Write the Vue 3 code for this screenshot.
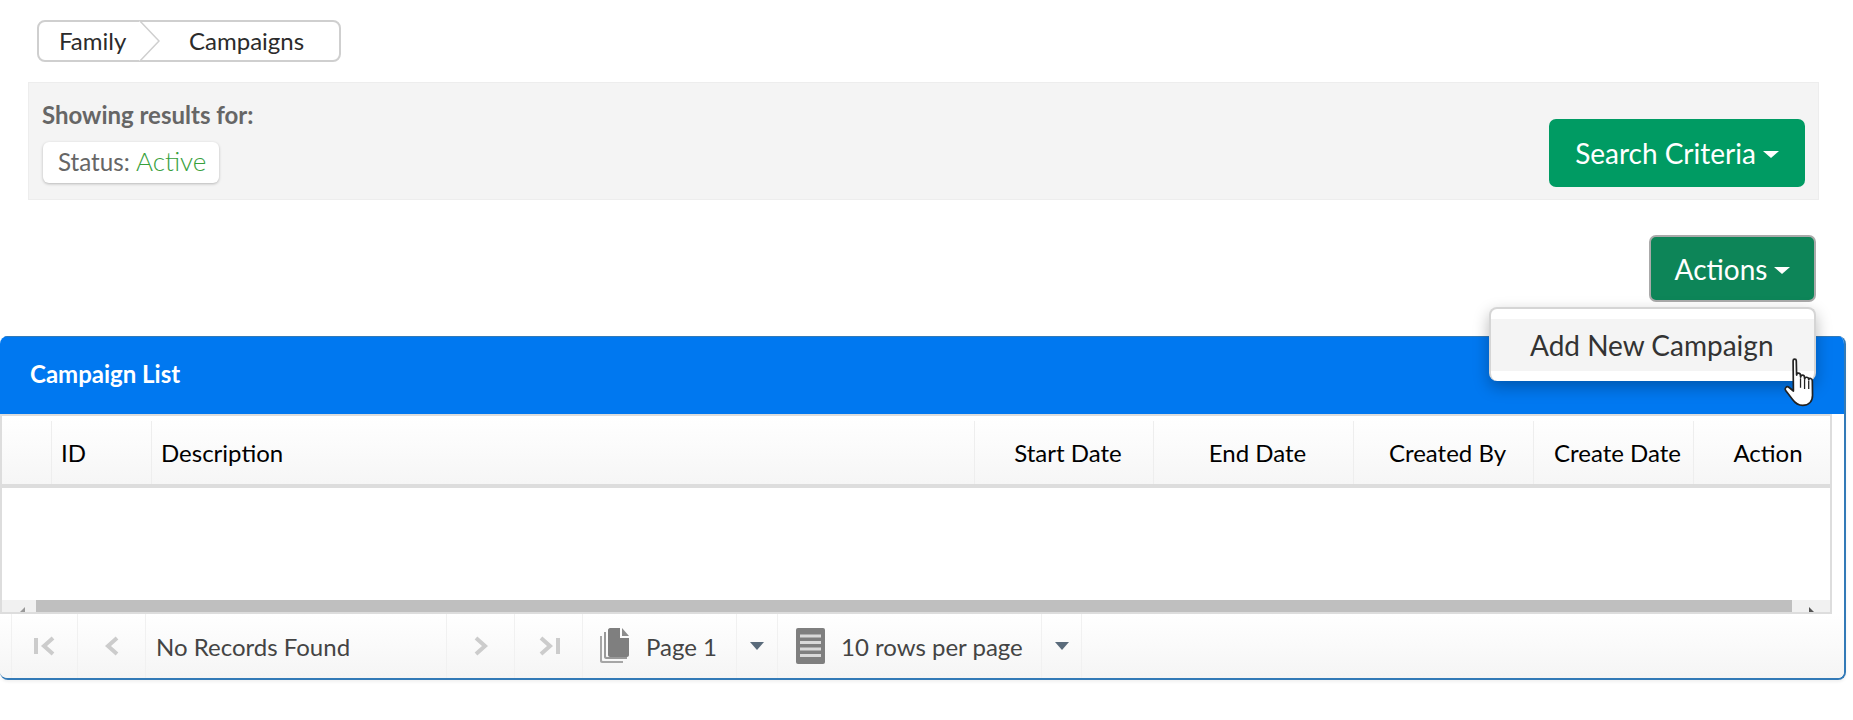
<template>
  <div class="page">
    <nav class="crumbs">
      <a class="crumb first">Family</a>
      <svg class="chev" width="22" height="42" viewBox="0 0 22 42"><path d="M1 0 L21 21 L1 42" fill="#fff" stroke="#cfcfcf" stroke-width="1.5"/></svg>
      <a class="crumb">Campaigns</a>
    </nav>

    <section class="filter">
      <div>
        <div class="filter-title">Showing results for:</div>
        <div class="chip">Status: <span class="active">Active</span></div>
      </div>
      <button class="btn search">Search Criteria<i class="caret"></i></button>
    </section>

    <div class="actions-row">
      <div class="actions-wrap">
        <button class="btn actions">Actions<i class="caret"></i></button>
        <div class="menu"><div class="menu-item">Add New Campaign</div></div>
        <svg class="hand" width="34" height="51" viewBox="0 0 32 48">
          <path d="M9.5 3.5 C9.5 1.5 12.5 1.5 12.5 3.5 L12.8 17 C13 14.5 16.2 14.5 16.4 17 L16.6 19 C16.8 16.5 20 16.5 20.2 19 L20.4 20.5 C20.8 18.5 24 18.5 24.2 21 C24.8 19.5 27.6 20 27.6 22.5 L27.8 36 C27.8 42 24 45.5 18.5 45.5 C14 45.5 11.5 43.5 9 40 L2.5 31.5 C1 29.5 3.5 27 5.5 28.5 L9.8 32 Z" fill="#fff" stroke="#222" stroke-width="1.6" stroke-linejoin="round"/>
          <path d="M16.5 20v9M20.3 21v9M24.2 22v8" stroke="#222" stroke-width="1.2" fill="none"/>
        </svg>
      </div>
    </div>

    <section class="card">
      <header class="card-head">Campaign List</header>
      <div class="grid-area">
        <div class="columns">
          <div v-for="col in columns" :key="col.label" class="col" :class="col.align" :style="{ width: col.width + 'px' }">{{ col.label }}</div>
        </div>
        <div class="rows"></div>
        <div class="scrollbar">
          <div class="track left"><i class="arrow arrow-l"></i></div>
          <div class="thumb"></div>
          <div class="track right"><i class="arrow arrow-r"></i></div>
        </div>
      </div>
      <footer class="pager">
        <div class="cell" style="width:12px"></div>
        <div class="cell icon-cell" style="width:66px">
          <svg width="24" height="22" viewBox="0 0 24 22"><path d="M3 3v16" stroke="#ccc" stroke-width="4"/><path d="M20 3 L11 11 L20 19" stroke="#ccc" stroke-width="4" fill="none"/></svg>
        </div>
        <div class="cell icon-cell" style="width:68px">
          <svg width="14" height="22" viewBox="0 0 14 22"><path d="M12 3 L3 11 L12 19" stroke="#ccc" stroke-width="4" fill="none"/></svg>
        </div>
        <div class="cell pager-text" style="width:301px">No Records Found</div>
        <div class="cell icon-cell" style="width:68px">
          <svg width="14" height="22" viewBox="0 0 14 22"><path d="M2 3 L11 11 L2 19" stroke="#ccc" stroke-width="4" fill="none"/></svg>
        </div>
        <div class="cell icon-cell" style="width:68px">
          <svg width="24" height="22" viewBox="0 0 24 22"><path d="M4 3 L13 11 L4 19" stroke="#ccc" stroke-width="4" fill="none"/><path d="M21 3v16" stroke="#ccc" stroke-width="4"/></svg>
        </div>
        <div class="cell pager-text page-cell" style="width:154px">
          <svg width="31" height="36" viewBox="0 0 31 36">
            <path d="M1 8h2v24c0 .6.4 1 1 1h20v2H3c-1 0-2-1-2-2z" fill="#a6a6a6"/>
            <path d="M5 4h2v24c0 .6.4 1 1 1h20v2H7c-1 0-2-1-2-2z" fill="#999"/>
            <path d="M11 0h10v10h9v17c0 1-1 2-2 2H11c-1 0-2-1-2-2V2c0-1 1-2 2-2z" fill="#7f7f7f"/>
            <path d="M23 0l7 8h-7z" fill="#8c8c8c"/>
          </svg>
          <span>Page 1</span>
        </div>
        <div class="cell icon-cell" style="width:41px"><i class="mini-caret"></i></div>
        <div class="cell pager-text page-cell rows-cell" style="width:264px">
          <svg width="29" height="36" viewBox="0 0 29 36">
            <rect width="29" height="36" rx="2" fill="#7f7f7f"/>
            <path d="M4 8h21M4 14.500h21M4 21h21M4 27.500h21" stroke="#d9d9d9" stroke-width="3"/>
          </svg>
          <span>10 rows per page</span>
        </div>
        <div class="cell icon-cell" style="width:40px"><i class="mini-caret"></i></div>
      </footer>
    </section>
  </div>
</template>

<script setup>
const columns = [
  { label: '', width: 52, align: 'start' },
  { label: 'ID', width: 100, align: 'start' },
  { label: 'Description', width: 823, align: 'start' },
  { label: 'Start Date', width: 179, align: 'mid' },
  { label: 'End Date', width: 200, align: 'mid' },
  { label: 'Created By', width: 180, align: 'mid' },
  { label: 'Create Date', width: 160, align: 'mid' },
  { label: 'Action', width: 136, align: 'mid' },
]
</script>

<style>
html, body { margin: 0; background: #fff; }
</style>

<style scoped>
.page {
  position: relative;
  height: 720px;
  overflow: hidden;
  padding-top: 20px;
  box-sizing: border-box;
  font-family: Lato, "Open Sans", sans-serif;
}
.crumbs {
  position: relative;
  display: flex;
  align-items: center;
  width: 304px;
  height: 42px;
  margin-left: 37px;
  box-sizing: border-box;
  padding-bottom: 1px;
  border: 2px solid #cfcfcf;
  border-radius: 8px;
  font-size: 24px;
  color: #2b2b2b;
}
.crumb.first { padding-left: 20px; width: 118px; box-sizing: border-box; }
.chev { position: absolute; left: 99px; top: -2px; }
.crumb:last-child { margin-left: 32px; }

.filter {
  display: flex;
  justify-content: space-between;
  align-items: flex-start;
  height: 118px;
  margin: 20px 34px 0 28px;
  box-sizing: border-box;
  padding: 19px 13px 0 13px;
  background: #f4f4f4;
  border: 1px solid #ededed;
}
.filter-title { font-size: 24px; font-weight: 700; color: #666; line-height: 26px; }
.chip {
  width: 176px;
  height: 41px;
  margin: 14px 0 0 1px;
  box-sizing: border-box;
  padding-left: 15px;
  line-height: 39px;
  background: #fff;
  border-radius: 6px;
  box-shadow: 0 1px 3px rgba(0,0,0,.25);
  font-size: 24.200px;
  color: #666;
}
.active { color: #37a03c; font-size: 26px; font-weight: 300; }

.btn {
  display: inline-flex;
  align-items: center;
  justify-content: center;
  color: #fff;
  font-family: inherit;
  font-size: 28px;
  border-radius: 7px;
  cursor: pointer;
}
.search {
  width: 256px;
  height: 68px;
  margin-top: 17px;
  border: 0;
  background: #009b63;
}
.actions {
  width: 167px;
  height: 67px;
  background: #0d8558;
  border: 2px solid #aaa;
}
.caret {
  margin-left: 7px;
  margin-top: 3px;
  border-top: 7px solid #fff;
  border-left: 8px solid transparent;
  border-right: 8px solid transparent;
}
.actions-row {
  display: flex;
  justify-content: flex-end;
  margin: 35px 37px 0 0;
}
.actions-wrap { position: relative; height: 67px; }
.menu {
  position: absolute;
  z-index: 3;
  top: 72px;
  right: 0;
  width: 327px;
  height: 74px;
  box-sizing: border-box;
  padding-top: 10px;
  background: #fff;
  border: 2px solid #d5d5d5;
  border-bottom: 0;
  border-radius: 8px;
  box-shadow: 0 6px 16px rgba(0,0,0,.28);
}
.menu-item {
  height: 52px;
  line-height: 52px;
  padding-left: 39px;
  background: #f4f4f4;
  font-size: 28px;
  color: #333;
}
.hand { position: absolute; z-index: 4; top: 122px; right: -1px; }

.card {
  width: 1846px;
  height: 344px;
  margin-top: 34px;
  box-sizing: border-box;
  background: #fff;
  border-right: 2px solid #337ab7;
  border-bottom: 2px solid #337ab7;
  border-radius: 8px;
  box-shadow: 0 2px 3px rgba(0,0,0,.06);
  overflow: hidden;
}
.card-head {
  height: 78px;
  box-sizing: border-box;
  padding-left: 30px;
  line-height: 74px;
  margin-right: -2px;
  background: #0078f0;
  border-top: 1px solid #337ab7;
  color: #fff;
  font-size: 24px;
  font-weight: 700;
}
.grid-area {
  width: 1832px;
  box-sizing: border-box;
  border: 2px solid #ddd;
}
.columns {
  display: flex;
  height: 72px;
  box-sizing: border-box;
  border-bottom: 4px solid #ddd;
  background: linear-gradient(#fff, #f6f6f6);
  color: #000;
  font-size: 24px;
  padding-top: 5px;
}
.col {
  display: flex;
  align-items: center;
  box-sizing: border-box;
  flex: none;
  border-right: 1px solid #eee;
}
.col.start { padding-left: 9px; }
.col.mid { justify-content: center; padding-left: 8px; }
.col:first-child { width: 50px !important; }
.col:last-child { border-right: 0; padding-left: 12px; }
.rows { height: 112px; background: #fff; }
.scrollbar { display: flex; height: 12px; background: #f1f1f1; }
.track { position: relative; background: #f1f1f1; }
.track.left { width: 34px; }
.track.right { width: 38px; }
.thumb { flex: 1; background: #bfbfbf; }
.arrow { position: absolute; bottom: 0; width: 5px; height: 5px; background: #555; }
.arrow-l { left: 18px; clip-path: polygon(100% 0, 100% 100%, 0 100%); background: #999; }
.arrow-r { left: 17px; clip-path: polygon(0 0, 100% 100%, 0 100%); }

.pager {
  display: flex;
  height: 64px;
  background: linear-gradient(#fff, #f5f5f5);
  color: #444;
}
.cell {
  display: flex;
  align-items: center;
  box-sizing: border-box;
  flex: none;
  border-right: 1px solid #f1f1f1;
}
.icon-cell { justify-content: center; }
.pager-text { font-size: 24px; padding-left: 10px; }
.page-cell { padding-left: 16px; gap: 16px; }
.rows-cell { padding-left: 18px; }
.mini-caret {
  border-top: 8px solid #5a6b7b;
  border-left: 7px solid transparent;
  border-right: 7px solid transparent;
}
</style>
